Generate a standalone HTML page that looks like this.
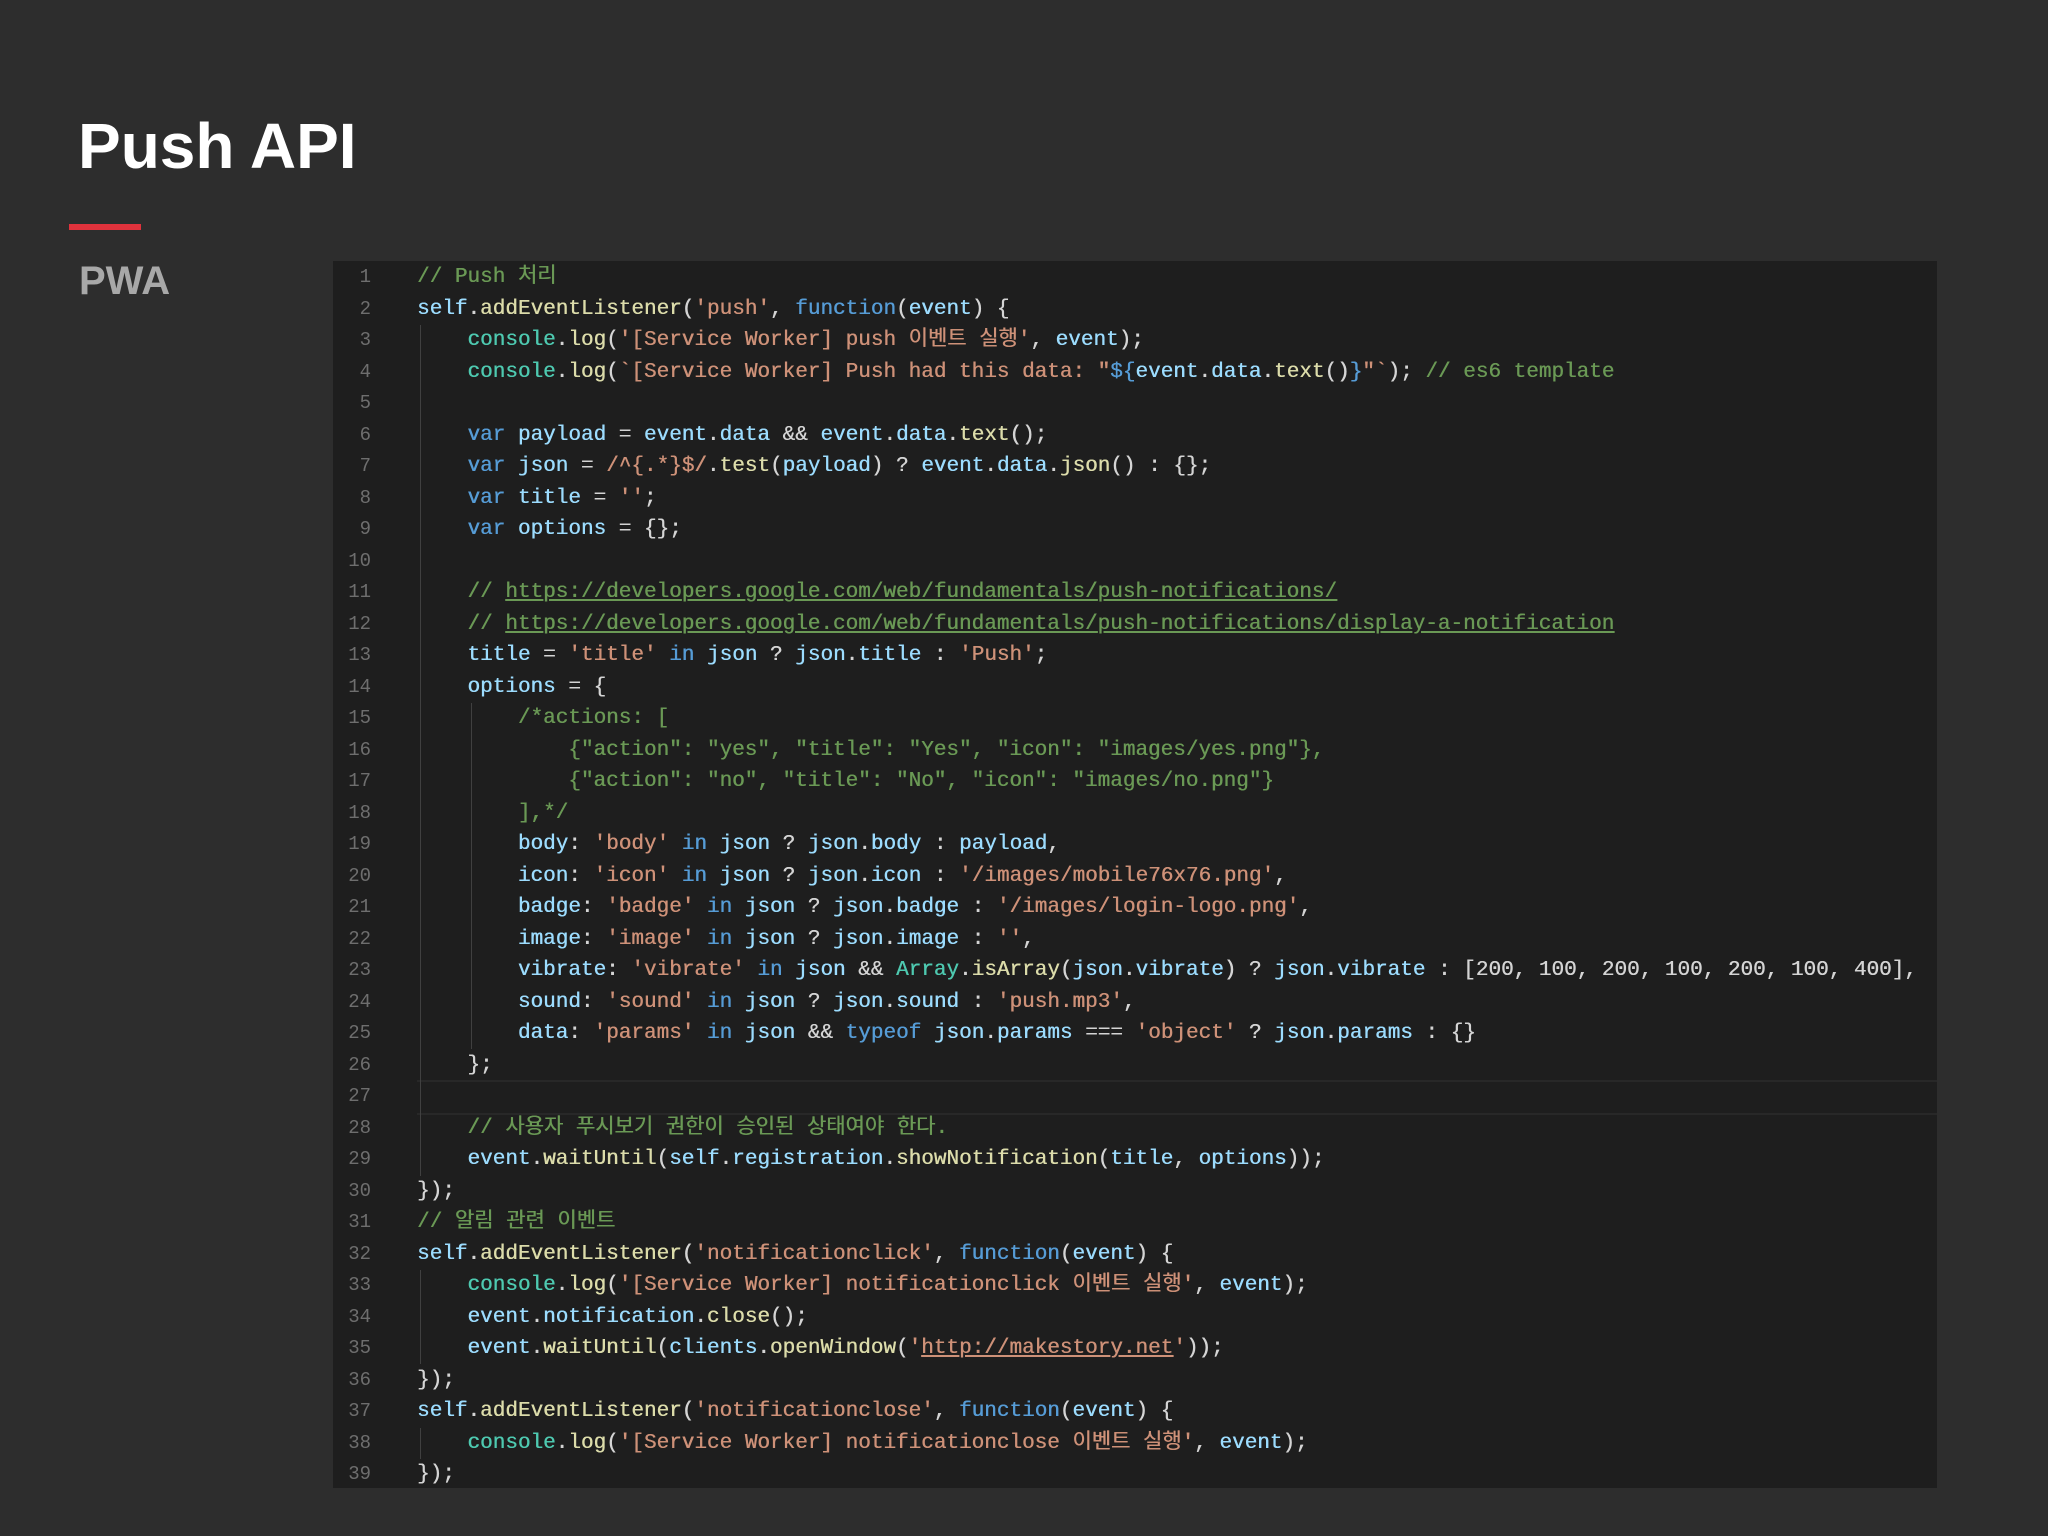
<!DOCTYPE html>
<html><head><meta charset="utf-8"><style>
body{margin:0;width:2048px;height:1536px;background:#2d2d2d;overflow:hidden;position:relative;font-family:"Liberation Sans",sans-serif}
h1{position:absolute;left:78px;top:106px;margin:0;font-size:64px;font-weight:bold;color:#fff;line-height:80px}
.bar{position:absolute;left:69px;top:224px;width:72px;height:6px;background:#e0323c}
.pwa{position:absolute;left:79px;top:259px;font-size:40px;font-weight:bold;color:#a8a8a8}
.code{position:absolute;left:333px;top:261px;width:1604px;height:1227px;background:#1e1e1e;overflow:hidden}
.ln{position:absolute;left:0;top:1px;width:38px;text-align:right;color:#6e6e6e;font:19px/31.5px "Liberation Mono",monospace;white-space:pre}
.src{position:absolute;left:84px;top:1px;color:#d4d4d4;font:21px/31.5px "Liberation Mono","Noto Sans CJK KR",monospace;white-space:pre;text-shadow:0.4px 0 0 currentColor}
.c{color:#6a9955}.s{color:#ce9178}.k{color:#569cd6}.v{color:#9cdcfe}.f{color:#dcdcaa}.t{color:#4ec9b0}.u{color:#6a9955;text-decoration:underline}.su{color:#ce9178;text-decoration:underline}
.cur{position:absolute;left:84px;right:0;top:819px;height:31px;border-top:2px solid #282828;border-bottom:2px solid #282828}
.g{position:absolute;width:1px;background:#404040}
</style></head><body>
<h1>Push API</h1>
<div class="bar"></div>
<div class="pwa">PWA</div>
<div class="code">
<div class="cur"></div>
<div class="g" style="left:87px;top:64px;height:851px"></div>
<div class="g" style="left:138px;top:442px;height:346px"></div>
<div class="g" style="left:87px;top:1009px;height:94px"></div>
<div class="g" style="left:87px;top:1167px;height:31px"></div>
<div class="ln">1
2
3
4
5
6
7
8
9
10
11
12
13
14
15
16
17
18
19
20
21
22
23
24
25
26
27
28
29
30
31
32
33
34
35
36
37
38
39</div>
<div class="src"><span class="c">// Push 처리</span>
<span class="v">self</span>.<span class="f">addEventListener</span>(<span class="s">'push'</span>, <span class="k">function</span>(<span class="v">event</span>) {
    <span class="t">console</span>.<span class="f">log</span>(<span class="s">'[Service Worker] push 이벤트 실행'</span>, <span class="v">event</span>);
    <span class="t">console</span>.<span class="f">log</span>(<span class="s">`[Service Worker] Push had this data: "</span><span class="k">${</span><span class="v">event</span>.<span class="v">data</span>.<span class="f">text</span>()<span class="k">}</span><span class="s">"`</span>); <span class="c">// es6 template</span>

    <span class="k">var</span> <span class="v">payload</span> = <span class="v">event</span>.<span class="v">data</span> &amp;&amp; <span class="v">event</span>.<span class="v">data</span>.<span class="f">text</span>();
    <span class="k">var</span> <span class="v">json</span> = <span class="s">/^{.*}$/</span>.<span class="f">test</span>(<span class="v">payload</span>) ? <span class="v">event</span>.<span class="v">data</span>.<span class="f">json</span>() : {};
    <span class="k">var</span> <span class="v">title</span> = <span class="s">''</span>;
    <span class="k">var</span> <span class="v">options</span> = {};

    <span class="c">// </span><span class="u">https://developers.google.com/web/fundamentals/push-notifications/</span>
    <span class="c">// </span><span class="u">https://developers.google.com/web/fundamentals/push-notifications/display-a-notification</span>
    <span class="v">title</span> = <span class="s">'title'</span> <span class="k">in</span> <span class="v">json</span> ? <span class="v">json</span>.<span class="v">title</span> : <span class="s">'Push'</span>;
    <span class="v">options</span> = {
        <span class="c">/*actions: [
            {"action": "yes", "title": "Yes", "icon": "images/yes.png"},
            {"action": "no", "title": "No", "icon": "images/no.png"}
        ],*/</span>
        <span class="v">body</span>: <span class="s">'body'</span> <span class="k">in</span> <span class="v">json</span> ? <span class="v">json</span>.<span class="v">body</span> : <span class="v">payload</span>,
        <span class="v">icon</span>: <span class="s">'icon'</span> <span class="k">in</span> <span class="v">json</span> ? <span class="v">json</span>.<span class="v">icon</span> : <span class="s">'/images/mobile76x76.png'</span>,
        <span class="v">badge</span>: <span class="s">'badge'</span> <span class="k">in</span> <span class="v">json</span> ? <span class="v">json</span>.<span class="v">badge</span> : <span class="s">'/images/login-logo.png'</span>,
        <span class="v">image</span>: <span class="s">'image'</span> <span class="k">in</span> <span class="v">json</span> ? <span class="v">json</span>.<span class="v">image</span> : <span class="s">''</span>,
        <span class="v">vibrate</span>: <span class="s">'vibrate'</span> <span class="k">in</span> <span class="v">json</span> &amp;&amp; <span class="t">Array</span>.<span class="f">isArray</span>(<span class="v">json</span>.<span class="v">vibrate</span>) ? <span class="v">json</span>.<span class="v">vibrate</span> : [200, 100, 200, 100, 200, 100, 400],
        <span class="v">sound</span>: <span class="s">'sound'</span> <span class="k">in</span> <span class="v">json</span> ? <span class="v">json</span>.<span class="v">sound</span> : <span class="s">'push.mp3'</span>,
        <span class="v">data</span>: <span class="s">'params'</span> <span class="k">in</span> <span class="v">json</span> &amp;&amp; <span class="k">typeof</span> <span class="v">json</span>.<span class="v">params</span> === <span class="s">'object'</span> ? <span class="v">json</span>.<span class="v">params</span> : {}
    };

    <span class="c">// 사용자 푸시보기 권한이 승인된 상태여야 한다.</span>
    <span class="v">event</span>.<span class="f">waitUntil</span>(<span class="v">self</span>.<span class="v">registration</span>.<span class="f">showNotification</span>(<span class="v">title</span>, <span class="v">options</span>));
});
<span class="c">// 알림 관련 이벤트</span>
<span class="v">self</span>.<span class="f">addEventListener</span>(<span class="s">'notificationclick'</span>, <span class="k">function</span>(<span class="v">event</span>) {
    <span class="t">console</span>.<span class="f">log</span>(<span class="s">'[Service Worker] notificationclick 이벤트 실행'</span>, <span class="v">event</span>);
    <span class="v">event</span>.<span class="v">notification</span>.<span class="f">close</span>();
    <span class="v">event</span>.<span class="f">waitUntil</span>(<span class="v">clients</span>.<span class="f">openWindow</span>(<span class="s">'</span><span class="su">http://makestory.net</span><span class="s">'</span>));
});
<span class="v">self</span>.<span class="f">addEventListener</span>(<span class="s">'notificationclose'</span>, <span class="k">function</span>(<span class="v">event</span>) {
    <span class="t">console</span>.<span class="f">log</span>(<span class="s">'[Service Worker] notificationclose 이벤트 실행'</span>, <span class="v">event</span>);
});</div>
</div>
</body></html>
